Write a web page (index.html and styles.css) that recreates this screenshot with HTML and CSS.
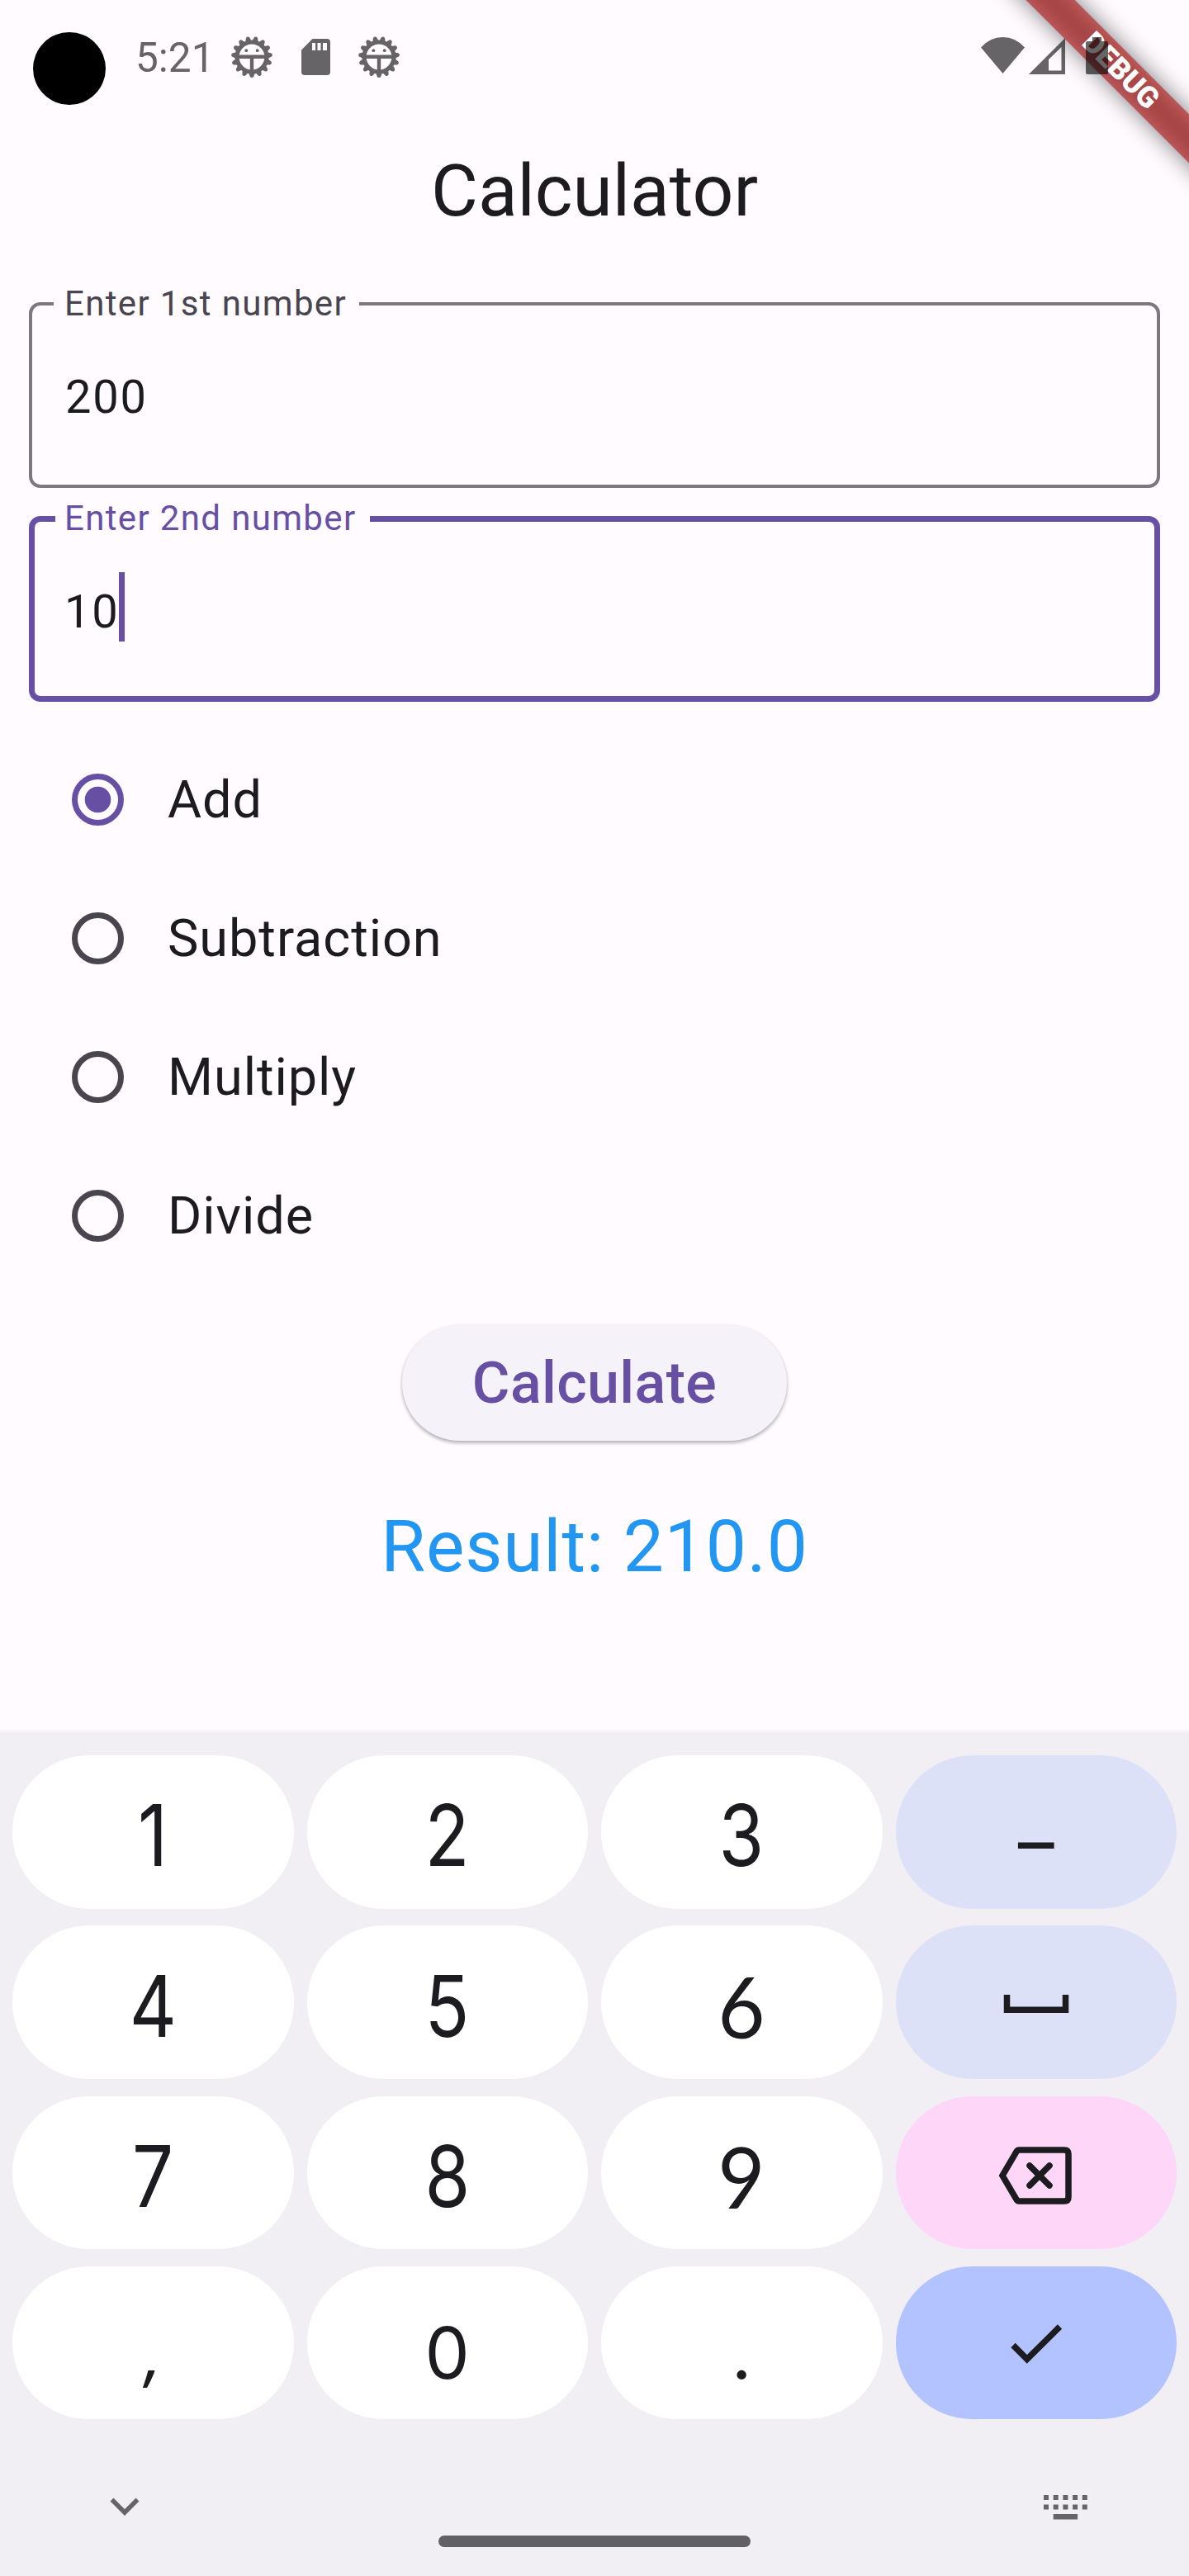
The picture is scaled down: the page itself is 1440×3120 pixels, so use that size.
FILE: index.html
```html
<!DOCTYPE html>
<html lang="en">
<head>
<meta charset="utf-8">
<title>Calculator</title>
<link rel="stylesheet" href="styles.css">
</head>
<body>
<svg class="defs" width="0" height="0">
  <path id="tooth" d="M20.500 8L22.700 1.600Q23.300 0 25 0T27.300 1.600L29.500 8Z"/>
  <symbol id="bug" viewBox="0 0 50 50">
    <circle cx="25" cy="25" r="18" fill="none" stroke="currentColor" stroke-width="5.200"/>
    <use href="#tooth" transform="rotate(12 25 25)"/>
    <use href="#tooth" transform="rotate(36 25 25)"/>
    <use href="#tooth" transform="rotate(60 25 25)"/>
    <use href="#tooth" transform="rotate(84 25 25)"/>
    <use href="#tooth" transform="rotate(108 25 25)"/>
    <use href="#tooth" transform="rotate(132 25 25)"/>
    <use href="#tooth" transform="rotate(156 25 25)"/>
    <use href="#tooth" transform="rotate(180 25 25)"/>
    <use href="#tooth" transform="rotate(204 25 25)"/>
    <use href="#tooth" transform="rotate(228 25 25)"/>
    <use href="#tooth" transform="rotate(252 25 25)"/>
    <use href="#tooth" transform="rotate(276 25 25)"/>
    <use href="#tooth" transform="rotate(300 25 25)"/>
    <use href="#tooth" transform="rotate(324 25 25)"/>
    <use href="#tooth" transform="rotate(348 25 25)"/>
    <path d="M9 24.700H41M25 25V41" stroke="currentColor" stroke-width="4.400" fill="none"/>
    <circle cx="18.300" cy="17.200" r="1.900"/><circle cx="31.700" cy="17.200" r="1.900"/>
  </symbol>
</svg>
<div class="screen">
  <header class="status">
    <span class="camera"></span>
    <span class="time">5:21</span>
    <svg class="bug"><use href="#bug"/></svg>
    <svg class="sd" viewBox="0 0 35 44"><path fill="currentColor" fill-rule="evenodd" d="M13.500 0H31a4 4 0 0 1 4 4V40a4 4 0 0 1-4 4H4a4 4 0 0 1-4-4V13.500ZM13 5v9h4V5Zm6.500 0v9h4V5ZM26 5v9h5V5Z"/></svg>
    <svg class="bug"><use href="#bug"/></svg>
    <span class="spacer"></span>
    <svg class="wifi" viewBox="0 0 53 44"><path fill="currentColor" d="M0 12.500Q11 0 26.500 0T53 12.500L26.500 44Z"/></svg>
    <svg class="signal" viewBox="0 0 44 44"><path fill="currentColor" fill-rule="evenodd" d="M44 0V44H0ZM39.500 11L24 26V39.500H39.500Z"/></svg>
    <svg class="battery" viewBox="0 0 27 45"><path fill="currentColor" d="M8 0H19V5H25a2 2 0 0 1 2 2V43a2 2 0 0 1-2 2H2a2 2 0 0 1-2-2V7a2 2 0 0 1 2-2H8Z"/></svg>
  </header>

  <h1 class="title">Calculator</h1>

  <main class="form">
    <fieldset class="field">
      <legend>Enter 1st number</legend>
      <span class="value">200</span>
    </fieldset>
    <fieldset class="field focused">
      <legend>Enter 2nd number</legend>
      <span class="value">10</span><i class="caret"></i>
    </fieldset>

    <div class="options">
      <div class="option"><span class="radio on"></span>Add</div>
      <div class="option"><span class="radio"></span>Subtraction</div>
      <div class="option"><span class="radio"></span>Multiply</div>
      <div class="option"><span class="radio"></span>Divide</div>
    </div>

    <div class="calculate">Calculate</div>
    <p class="result">Result: 210.0</p>
  </main>

  <section class="keyboard">
    <div class="keys">
      <div class="key"><span>1</span></div>
      <div class="key"><span>2</span></div>
      <div class="key"><span>3</span></div>
      <div class="key tint"><span class="dash">–</span></div>
      <div class="key"><span>4</span></div>
      <div class="key"><span>5</span></div>
      <div class="key"><span class="open">6</span></div>
      <div class="key tint"><svg width="100" height="100" viewBox="0 0 100 100"><path d="M14.500 41V59.300H85.500V41"/></svg></div>
      <div class="key"><span>7</span></div>
      <div class="key"><span>8</span></div>
      <div class="key"><span class="open">9</span></div>
      <div class="key pink"><svg width="100" height="100" viewBox="0 0 100 100"><path d="M29 23H84Q89 23 89 28V80Q89 85 84 85H29Q27 85 25.500 82L9 54L25.500 26Q27 23 29 23Z"/><path class="round" d="M42 42L66 66M66 42L42 66"/></svg></div>
      <div class="key small"><span class="comma">,</span></div>
      <div class="key small"><span>0</span></div>
      <div class="key small"><span>.</span></div>
      <div class="key blue"><svg width="100" height="100" viewBox="0 0 100 100"><path d="M22 52.500L38.800 69.500L78.500 30"/></svg></div>
    </div>
    <div class="tools">
      <svg width="36" height="24" viewBox="0 0 36 24"><path d="M2.500 2.500L18 18L33.500 2.500" fill="none" stroke="#666468" stroke-width="5.500"/></svg>
      <svg width="54" height="31" viewBox="0 0 54 31"><path fill="#666468" d="M0 1h6v6h-6zM11.700 1h6v6h-6zM23.400 1h6v6h-6zM35.100 1h6v6h-6zM46.800 1h6v6h-6zM0 12.500h6v6h-6zM11.700 12.500h6v6h-6zM23.400 12.500h6v6h-6zM35.100 12.500h6v6h-6zM46.800 12.500h6v6h-6zM11.700 24h29.400v6.500H11.700z"/></svg>
    </div>
    <div class="pill"></div>
  </section>

  <div class="banner">
    <div class="ribbon-shadow"></div>
    <div class="ribbon">DEBUG</div>
  </div>
</div>
</body>
</html>
```
FILE: styles.css
```css
* { box-sizing: border-box; }

body {
  margin: 0;
  background: #fffbff;
  font-family: Roboto, "Liberation Sans", sans-serif;
  color: #1c1b1f;
}

.defs { display: block; }

.screen {
  position: relative;
  width: 1440px;
  height: 3120px;
  overflow: hidden;
  display: flex;
  flex-direction: column;
}

/* status bar */
.status {
  height: 138px;
  padding: 0 98px 0 40px;
  display: flex;
  align-items: center;
  color: #666466;
}

.camera {
  width: 88px;
  height: 88px;
  margin-top: 28px;
  border-radius: 50%;
  background: #000;
}

.time {
  margin-left: 36px;
  width: 113px;
  padding-top: 3px;
  font-size: 49.500px;
  line-height: 135px;
}

.bug { width: 50px; height: 50px; margin-left: 3px; fill: currentColor; }
.sd { width: 35px; height: 44px; margin: 0 31px 0 35px; }
.spacer { flex: 1; }
.wifi { width: 53px; height: 44px; margin-top: -4px; }
.signal { width: 44px; height: 44px; margin: -2px 25px 0 5px; }
.battery { position: relative; z-index: 3; width: 27px; height: 45px; margin-top: -3px; color: rgba(0, 0, 0, .6); }

.title {
  margin: 0;
  height: 190px;
  line-height: 187px;
  text-align: center;
  font-size: 87.500px;
  font-weight: 400;
}

.form {
  height: 1767px;
  padding: 18px 35px 0;
  display: flex;
  flex-direction: column;
}

/* outlined text fields */
.field {
  margin: 0;
  height: 245px;
  padding: 0 40px;
  border: 4px solid #7d7781;
  border-radius: 14px;
  display: block;
  min-width: 0;
}

.field legend {
  height: 44px;
  line-height: 44px;
  margin-left: -14px;
  padding: 0 15px 0 13px;
  font-size: 42px;
  letter-spacing: 1.350px;
  color: #49454f;
}

.value {
  display: inline-block;
  vertical-align: top;
  margin-top: 49px;
  font-size: 56px;
  line-height: 84px;
  letter-spacing: 1.750px;
}

.focused { height: 244px; margin-top: 15px; padding: 0 36px; border: 7px solid #6750a4; }
.focused legend { margin-left: -11px; padding: 0 16px 0 11px; color: #6750a4; }
.caret {
  display: inline-block;
  vertical-align: top;
  width: 7px;
  height: 84px;
  margin-top: 43px;
  margin-left: 0;
  background: #6750a4;
}

.options { margin-top: 34px; }

.option {
  height: 168px;
  padding-left: 52px;
  display: flex;
  align-items: center;
  font-size: 63px;
  letter-spacing: .950px;
}

.radio {
  width: 63px;
  height: 63px;
  margin-right: 53px;
  border: 7px solid #49454f;
  border-radius: 50%;
}

.radio.on {
  border-color: #6750a4;
  background: radial-gradient(circle, #6750a4 15.400px, transparent 16.200px);
}

.calculate {
  align-self: center;
  width: 466px;
  height: 140px;
  margin-top: 49px;
  border-radius: 70px;
  background: #f6f2f9;
  box-shadow: 0 3px 4px rgba(0, 0, 0, .24), 0 1px 4px rgba(0, 0, 0, .1);
  color: #6750a4;
  font-size: 70px;
  font-weight: 500;
  line-height: 140px;
  text-align: center;
  letter-spacing: .350px;
}

.result {
  margin: 76px 0 0;
  line-height: 105px;
  text-align: center;
  font-size: 87.500px;
  letter-spacing: .875px;
  color: #2196f3;
}

/* on-screen keyboard */
.keyboard {
  height: 1025px;
  border-top: 3px solid #f8f4f9;
  background: #f1eff4;
  display: flex;
  flex-direction: column;
}

.keys {
  padding: 28px 15px 0;
  display: grid;
  grid-template-columns: repeat(4, 1fr);
  grid-auto-rows: 185.500px;
  gap: 20.800px 16px;
}

.key {
  display: flex;
  align-items: center;
  justify-content: center;
  border-radius: 93px;
  background: #fff;
  font-family: Inter, Roboto, sans-serif;
  font-size: 103px;
  line-height: 185px;
  color: #1c1b1f;
}

.key span { transform: translateY(4px) scaleX(.86); }
.key .open { font-family: Lato, Inter, sans-serif; transform: translateY(4px) scaleX(.96); }
.key.tint { background: #dde1f8; }
.key.pink { background: #fdd6f8; }
.key.blue { background: #b2c3ff; }
.key .dash { font-family: "Open Sans", sans-serif; font-size: 104px; transform: translateY(4px); }
.key.small { font-size: 86px; }
.key.small span { transform: translateY(13px); }
.key.small .comma { font-family: "Open Sans", sans-serif; transform: translateY(10px) skewX(-6deg); }
.key svg path { fill: none; stroke: #1c1b1f; stroke-width: 7.500px; }
.key svg .round { stroke-linecap: round; }

.tools {
  margin-top: 91px;
  padding: 0 122px 0 133px;
  display: flex;
  justify-content: space-between;
  align-items: center;
}

.pill {
  align-self: center;
  width: 378px;
  height: 14px;
  margin-top: 19px;
  border-radius: 7px;
  background: #616163;
}

/* corner ribbon */
.banner {
  position: absolute;
  top: 0;
  right: 0;
  z-index: 2;
  width: 300px;
  height: 300px;
  overflow: hidden;
}

.ribbon, .ribbon-shadow {
  position: absolute;
  left: -34px;
  top: 63px;
  width: 500px;
  height: 42.400px;
  transform: rotate(45deg);
}

.ribbon-shadow { background: rgba(0, 0, 0, .5); filter: blur(14px); }

.ribbon {
  padding-left: 4px;
  background: rgba(183, 28, 28, .627);
  color: #fff;
  font-size: 35.700px;
  font-weight: 900;
  line-height: 42px;
  text-align: center;
}
```
